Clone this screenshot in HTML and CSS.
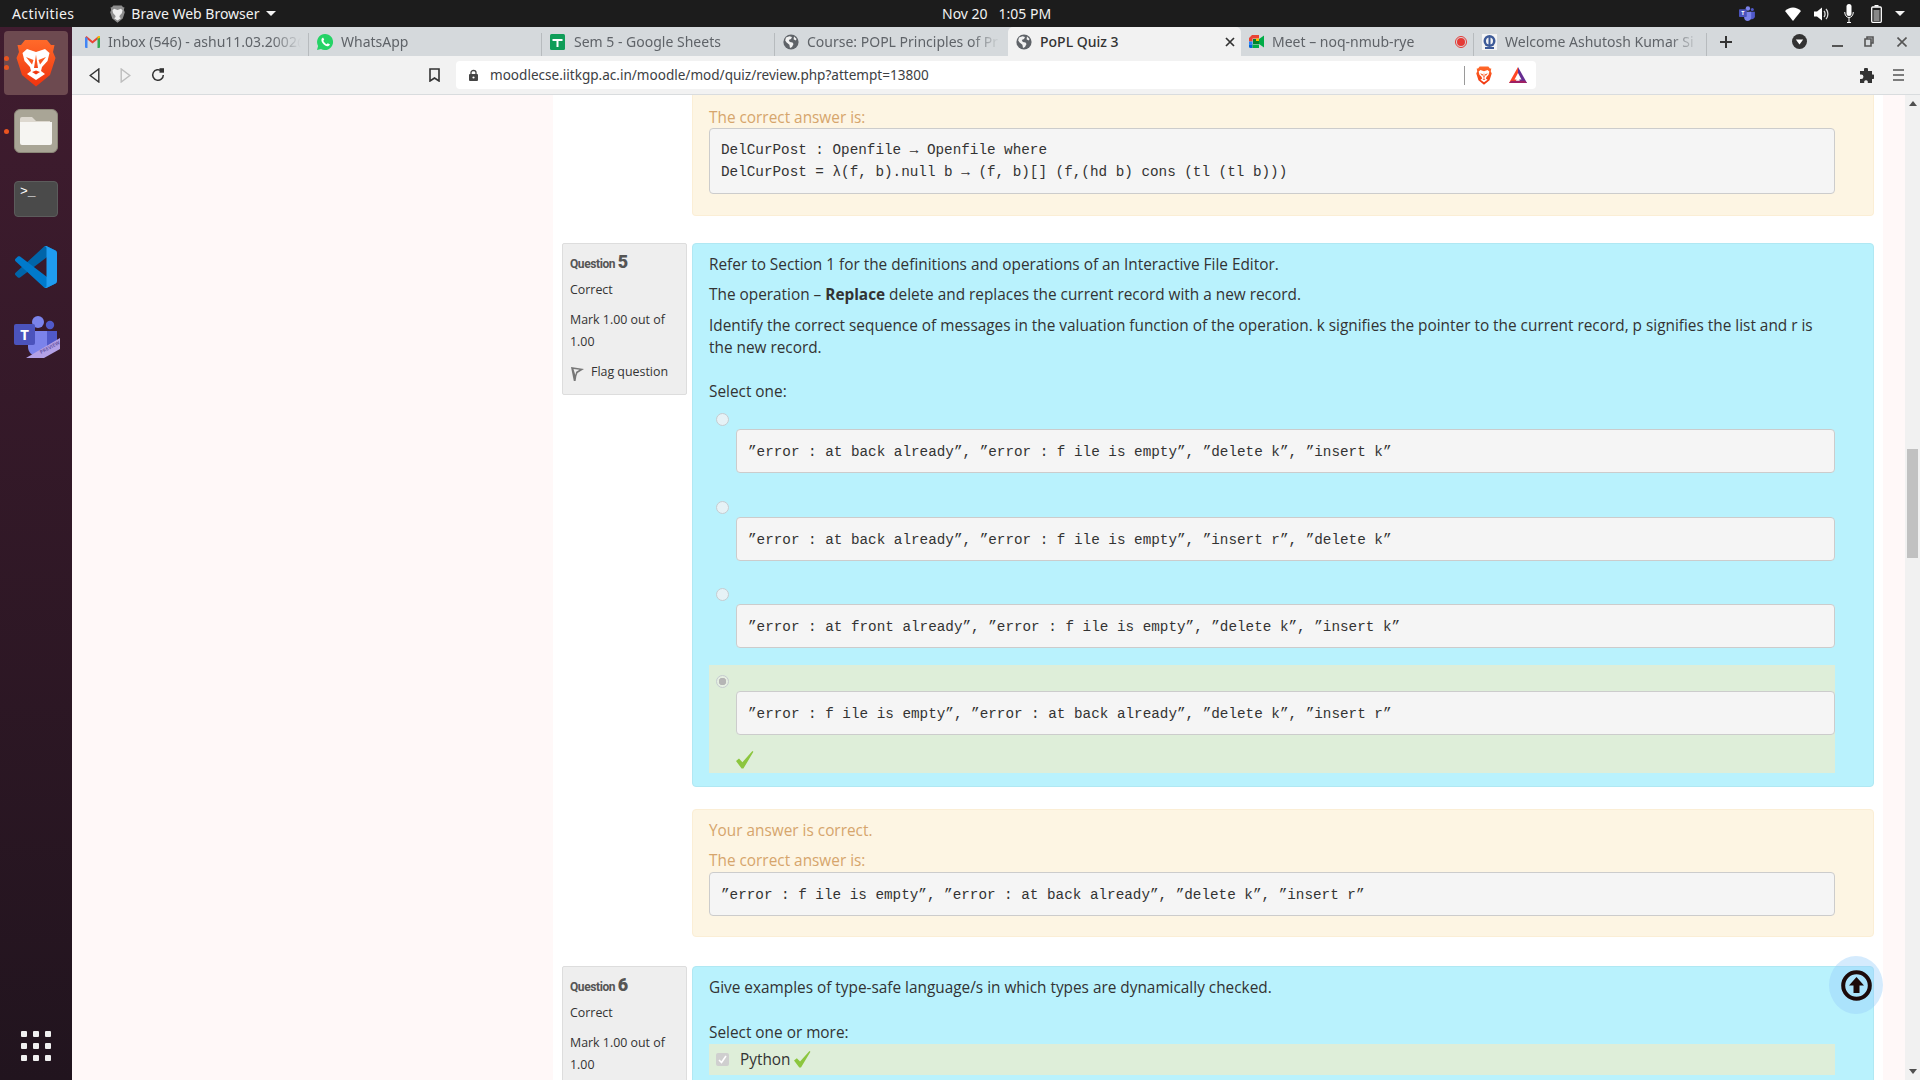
FILE: index.html
```html
<!DOCTYPE html>
<html lang="en">
<head>
    <meta charset="UTF-8">
    <meta name="viewport" content="width=device-width, initial-scale=1.0">
    <title>PoPL Quiz 3</title>
    <link rel="stylesheet" href="styles.css">
</head>
<body>

    <!-- shared icons -->
    <svg class="defs" width="0" height="0">
        <defs>
            <linearGradient id="braveGrad" x1="0" y1="0" x2="0" y2="1">
                <stop offset="0" stop-color="#ff6a2a"/>
                <stop offset="1" stop-color="#f0330e"/>
            </linearGradient>
            <symbol id="brave" viewBox="0 0 40 48">
                <path fill="url(#braveGrad)" d="M9 1H31L35 6H38.5L37 13L39.5 19L34 36L20 47.5L6 36L.5 19L3 13L1.5 6H5Z"/>
                <path fill="#fff" d="M11 10L20 13L29 10L33.5 14L31.5 22L26 28L25 32L29 35L20 41L11 35L15 32L14 28L8.5 22L6.5 14Z"/>
                <path fill="url(#braveGrad)" d="M10 18L17.5 21L16 25.5ZM30 18L22.5 21L24 25.5ZM20 15.5L18 29H22ZM16 33L20 31.5L24 33L20 35.5Z"/>
            </symbol>
            <symbol id="globe" viewBox="0 0 16 16">
                <circle cx="8" cy="8" r="7.6" fill="#5f6368"/>
                <path fill="#f2f2f2" d="M3 3.4L6.5 2.2L9 3L8 5L5.8 6L6.8 8L9.5 8.4L10.5 10L9 13L7 14L6.4 10.8L3.6 8.6L2.2 6.6ZM11 2.6L13.6 5L12.6 6.4L10.6 5.2Z"/>
            </symbol>
            <symbol id="check" viewBox="0 0 18 18">
                <path fill="#8cc63f" d="M0 10L3 7.6L6.4 11.2L16.4 0L17.4 .8L7.4 17.6H5.6Z"/>
            </symbol>
            <symbol id="teams" viewBox="0 0 46 42">
                <circle cx="24" cy="6" r="6" fill="#7b83eb"/>
                <circle cx="36" cy="9" r="4.2" fill="#5059c9"/>
                <path fill="#5059c9" d="M30 15H43V28C43 32 39 35 35 35H30Z"/>
                <path fill="#7b83eb" d="M14 15H33V31C33 36 28 40 23 40C18 40 14 36 14 31Z"/>
                <rect y="8" width="21" height="21" rx="2" fill="#4b53bc"/>
                <text x="10.5" y="24" class="teams-t">T</text>
            </symbol>
        </defs>
    </svg>

    <header class="topbar">
        <span class="top-item activities">Activities</span>
        <span class="top-item app-menu">
            <svg class="top-lion" width="15" height="18" viewBox="0 0 40 48">
                <path fill="#8e8e8e" d="M9 1H31L35 6H38.5L37 13L39.5 19L34 36L20 47.5L6 36L.5 19L3 13L1.5 6H5Z"/>
                <path fill="#eee" d="M11 10L20 13L29 10L33.5 14L31.5 22L26 28L25 32L29 35L20 41L11 35L15 32L14 28L8.5 22L6.5 14Z"/>
            </svg>
            Brave Web Browser
            <i class="caret"></i>
        </span>
        <span class="clock">Nov 20 &nbsp; 1:05 PM</span>
        <div class="tray">
            <svg class="tray-teams" width="17" height="16"><use href="#teams"/></svg>
            <svg class="tray-wifi" width="16" height="14" viewBox="0 0 16 14"><path fill="#fff" d="M0 4C4.500 -.8 11.500 -.8 16 4L8 14Z"/></svg>
            <svg class="tray-vol" width="15" height="14" viewBox="0 0 15 14"><path fill="#fff" d="M0 4.500H3L8 .5V13.500L3 9.500H0Z"/><path fill="none" stroke="#ddd" stroke-width="1.300" d="M10 4C11.400 5.500 11.400 8.500 10 10M12 2C14.500 4.500 14.500 9.500 12 12"/></svg>
            <svg class="tray-mic" width="10" height="19" viewBox="0 0 10 19"><rect x="2.500" width="5" height="12" rx="2.500" fill="#fff"/><path fill="none" stroke="#fff" d="M.7 8C.7 11 2.500 13.500 5 13.500S9.300 11 9.300 8M5 13.500V18M3 18.500H7"/></svg>
            <svg class="tray-bat" width="11" height="18" viewBox="0 0 11 18"><path fill="#fff" d="M3.500 0H7.500V1.500H3.500Z"/><rect x=".7" y="2" width="9.600" height="15.300" rx="1" fill="none" stroke="#fff" stroke-width="1.300"/><rect x="2.500" y="5" width="6" height="11" fill="#888"/></svg>
            <i class="caret tray-caret"></i>
        </div>
    </header>

    <div class="desktop">
        <nav class="dock">
            <div class="dock-item">
                <div class="dock-active">
                    <svg width="40" height="48"><use href="#brave"/></svg>
                </div>
                <span class="run-dots"><i></i><i></i></span>
            </div>
            <div class="dock-item">
                <div class="files-tile">
                    <svg width="32" height="28" viewBox="0 0 32 28">
                        <path fill="#ddd8cf" d="M2 0H12L16 4H30V12H0V2Q0 0 2 0Z"/>
                        <path fill="#f6f5f2" d="M0 5H32V26Q32 28 30 28H2Q0 28 0 26Z"/>
                    </svg>
                </div>
                <span class="run-dots"><i></i></span>
            </div>
            <div class="dock-item">
                <div class="term-tile"><span>&gt;_</span></div>
            </div>
            <div class="dock-item">
                <svg width="42" height="42" viewBox="0 0 100 100">
                    <path fill="#0065a9" d="M96.46 10.8L75.86.88C73.47-.27 70.62.21 68.75 2.08L1.3 63.58C-.52 65.24-.51 68.09 1.3 69.75L6.81 74.75C8.3 76.1 10.53 76.2 12.13 74.99L93.36 13.37C96.09 11.3 100 13.25 100 16.67V16.43C100 14.03 98.62 11.84 96.46 10.8Z"/>
                    <path fill="#007acc" d="M96.46 89.2L75.86 99.12C73.47 100.27 70.62 99.79 68.75 97.92L1.3 36.42C-.52 34.76-.51 31.91 1.3 30.25L6.81 25.25C8.3 23.9 10.53 23.8 12.13 25.01L93.36 86.63C96.09 88.7 100 86.75 100 83.33V83.57C100 85.97 98.62 88.16 96.46 89.2Z"/>
                    <path fill="#1f9cf0" d="M75.86 99.13C73.47 100.27 70.62 99.79 68.75 97.92C71.06 100.22 75 98.59 75 95.33V4.67C75 1.41 71.06-.22 68.75 2.08C70.62.21 73.47-.27 75.86.87L96.46 10.78C98.62 11.82 100 14.01 100 16.41V83.59C100 85.99 98.62 88.18 96.46 89.22Z"/>
                </svg>
            </div>
            <div class="dock-item dock-teams">
                <svg width="46" height="42" viewBox="0 0 46 42">
                    <use href="#teams" width="46" height="42"/>
                    <path fill="#b3a1e6" d="M12 42L46 22V33L30 42Z"/>
                    <text x="27" y="38" class="preview-t" transform="rotate(-28 27 38)">PREVIEW</text>
                </svg>
            </div>
            <div class="app-grid">
                <i></i><i></i><i></i><i></i><i></i><i></i><i></i><i></i><i></i>
            </div>
        </nav>

        <div class="browser">
            <div class="tabstrip">
                <div class="tab tab-first sep">
                    <svg class="fav" width="15" height="12" viewBox="0 0 15 12">
                        <path fill="#ea4335" d="M0 1.500L1.500 0L7.500 5L13.500 0L15 1.500L7.500 7.500Z"/>
                        <path fill="#4285f4" d="M0 1.500H2.500V12H1Q0 12 0 11Z"/>
                        <path fill="#34a853" d="M12.500 1.500H15V11Q15 12 14 12H12.500Z"/>
                        <path fill="#fbbc04" d="M12.500 3L15 1.500V0L13.500 0L12.500 1Z"/>
                    </svg>
                    <span class="tab-title">Inbox (546) - ashu11.03.2002@</span>
                </div>
                <div class="tab sep">
                    <svg class="fav" width="16" height="16" viewBox="0 0 16 16">
                        <path fill="#25d366" d="M8 0A8 8 0 1 1 4 14.900L0 16L1.100 12A8 8 0 0 1 8 0Z"/>
                        <path fill="#fff" d="M5.500 3.800C4 5 4 7 5.500 9S9 12.500 11 12.200C12.300 12 13 10.800 12.800 10.300L10.700 9.200L9.700 10.200C8.400 9.800 6.700 8 6.300 6.700L7.200 5.700L6.300 3.700Z"/>
                    </svg>
                    <span class="tab-title">WhatsApp</span>
                </div>
                <div class="tab sep">
                    <svg class="fav fav-wide" width="15" height="16" viewBox="0 0 15 16">
                        <rect width="15" height="16" rx="1.500" fill="#0f9d58"/>
                        <path fill="#fff" d="M2.500 5H12.500V7H8.500V13H6.500V7H2.500Z"/>
                    </svg>
                    <span class="tab-title">Sem 5 - Google Sheets</span>
                </div>
                <div class="tab">
                    <svg class="fav" width="16" height="16"><use href="#globe"/></svg>
                    <span class="tab-title">Course: POPL Principles of Pr</span>
                </div>
                <div class="tab tab-active">
                    <svg class="fav" width="16" height="16"><use href="#globe"/></svg>
                    <span class="tab-title">PoPL Quiz 3</span>
                    <svg class="tab-close" width="10" height="10" viewBox="0 0 10 10"><path stroke="#333" stroke-width="1.700" d="M1 1L9 9M9 1L1 9"/></svg>
                </div>
                <div class="tab sep">
                    <svg class="fav" width="15" height="13" viewBox="0 0 15 13">
                        <path fill="#00832d" d="M4 4H10V9H4Z"/>
                        <path fill="#ea4335" d="M3 0H10V3.500H3.500V6.500H0V3Z"/>
                        <path fill="#2684fc" d="M0 6.500H3.500V9.500H0Z"/>
                        <path fill="#0066da" d="M0 9.500H3.500V13H1.500Q0 13 0 11.500Z"/>
                        <path fill="#00ac47" d="M3.500 9.500H10V13H3.500Z"/>
                        <path fill="#ffba00" d="M10 0V6L7 6V3.500H10Z"/>
                        <path fill="#00ac47" d="M10 4L15 .5V12.500L10 9Z"/>
                    </svg>
                    <span class="tab-title">Meet – noq-nmub-rye</span>
                    <svg class="rec-dot" width="12" height="12" viewBox="0 0 12 12"><circle cx="6" cy="6" r="5.500" fill="none" stroke="#e53935"/><circle cx="6" cy="6" r="4" fill="#e53935"/></svg>
                </div>
                <div class="tab sep">
                    <svg class="fav" width="15" height="16" viewBox="0 0 15 16">
                        <rect width="15" height="16" fill="#f4f4f4"/>
                        <circle cx="7.500" cy="7" r="6" fill="#3d5a98"/>
                        <circle cx="7.500" cy="7" r="3.500" fill="#f4f4f4"/>
                        <path fill="#3d5a98" d="M6.500 3H8.500V12H6.500ZM3 13H12V15H3Z"/>
                    </svg>
                    <span class="tab-title">Welcome Ashutosh Kumar Si</span>
                </div>
                <svg class="new-tab" width="14" height="14" viewBox="0 0 14 14"><path stroke="#333" stroke-width="2" d="M7 1V13M1 7H13"/></svg>
                <div class="win-controls">
                    <svg width="15" height="15" viewBox="0 0 15 15"><circle cx="7.500" cy="7.500" r="7.500" fill="#333"/><path fill="#fff" d="M3.800 5.500H11.200L7.500 10.500Z"/></svg>
                    <svg class="win-min" width="11" height="10" viewBox="0 0 11 10"><path stroke="#555" stroke-width="2" d="M0 9H11"/></svg>
                    <svg class="win-max" width="10" height="11" viewBox="0 0 10 11"><path fill="none" stroke="#555" stroke-width="1.600" d="M3 3V1H9V7H7M1 3H7V10H1Z"/></svg>
                    <svg class="win-close" width="10" height="10" viewBox="0 0 10 10"><path stroke="#555" stroke-width="1.600" d="M.5 .5L9.500 9.500M9.500 .5L.5 9.500"/></svg>
                </div>
            </div>

            <div class="toolbar">
                <div class="nav-buttons">
                    <svg width="11" height="15" viewBox="0 0 11 15"><path fill="none" stroke="#333" stroke-width="1.400" d="M9.800 1V14L1.200 7.500Z"/></svg>
                    <svg width="11" height="15" viewBox="0 0 11 15"><path fill="none" stroke="#bdbdbd" stroke-width="1.400" d="M1.200 1V14L9.800 7.500Z"/></svg>
                    <svg width="14" height="14" viewBox="0 0 14 14"><path fill="none" stroke="#333" stroke-width="1.500" d="M12.300 7A5.300 5.300 0 1 1 10.500 3"/><path fill="#333" d="M8.500 .2H13V4.700H8.500Z"/></svg>
                </div>
                <svg class="bookmark" width="11" height="14" viewBox="0 0 11 14"><path fill="none" stroke="#333" stroke-width="1.600" d="M1 1H10V13L5.500 10L1 13Z"/></svg>
                <div class="urlbar">
                    <svg class="lock" width="9" height="12" viewBox="0 0 9 12"><path fill="none" stroke="#444" stroke-width="1.300" d="M2 5.500V3.500C2 .8 7 .8 7 3.500V5.500"/><rect y="5" width="9" height="7" rx="1" fill="#444"/><circle cx="4.500" cy="8.500" r="1.100" fill="#fff"/></svg>
                    <span class="url-text">moodlecse.iitkgp.ac.in/moodle/mod/quiz/review.php?attempt=13800</span>
                    <span class="url-sep"></span>
                    <svg class="url-lion" width="16" height="19"><use href="#brave"/></svg>
                    <svg class="url-bat" width="18" height="16" viewBox="0 0 18 16">
                        <path fill="#662d91" d="M9 0L18 16H11.500L9 9Z"/>
                        <path fill="#ff4724" d="M9 0L0 16H6L9 9Z"/>
                        <path fill="#9e1f63" d="M0 16H18L15.800 13.800H2.200Z"/>
                        <path fill="#fff" d="M9 6L12.500 12.500H5.500Z"/>
                    </svg>
                </div>
                <svg class="puzzle" width="15" height="15" viewBox="0 0 15 15"><path fill="#333" d="M5 1.500A2 2 0 0 1 9 1.500V3H13V6.500H14A2.200 2.200 0 0 1 14 11H13V15H8.800V13.500A1.900 1.900 0 0 0 5.200 13.500V15H1V11H2.200A2.200 2.200 0 0 0 2.200 6.500H1V3H5Z"/></svg>
                <svg class="menu" width="11" height="12" viewBox="0 0 11 12"><path stroke="#555" stroke-width="1.400" d="M0 1H11M0 6H11M0 11H11"/></svg>
            </div>

            <div class="viewport">
                <div class="page">
                    <main class="page-main">

                        <div class="outcome outcome-top">
                            <div class="outcome-line">The correct answer is:</div>
                            <pre class="code-box">DelCurPost : Openfile → Openfile where
DelCurPost = λ(f, b).null b → (f, b)[] (f,(hd b) cons (tl (tl b)))</pre>
                        </div>

                        <section class="que">
                            <div class="info">
                                <div class="que-no">Question <b>5</b></div>
                                <div class="info-line">Correct</div>
                                <div class="info-line">Mark 1.00 out of 1.00</div>
                                <div class="flag">
                                    <svg width="13" height="15" viewBox="0 0 13 15"><path fill="#777" d="M0 1L13 3L6.500 7L5.400 10L4.600 15H2.800ZM2.500 3L4.300 9L5.200 5.800L8.500 3.800Z"/></svg>
                                    <span>Flag question</span>
                                </div>
                            </div>
                            <div class="que-main">
                                <div class="formulation">
                                    <p>Refer to Section 1 for the definitions and operations of an Interactive File Editor.</p>
                                    <p>The operation – <strong>Replace</strong> delete and replaces the current record with a new record.</p>
                                    <p>Identify the correct sequence of messages in the valuation function of the operation. k signifies the pointer to the current record, p signifies the list and r is the new record.</p>
                                    <div class="prompt">Select one:</div>
                                    <div class="option">
                                        <i class="radio"></i>
                                        <pre class="code-box code-quoted">”error : at back already”, ”error : f ile is empty”, ”delete k”, ”insert k”</pre>
                                    </div>
                                    <div class="option">
                                        <i class="radio"></i>
                                        <pre class="code-box code-quoted">”error : at back already”, ”error : f ile is empty”, ”insert r”, ”delete k”</pre>
                                    </div>
                                    <div class="option">
                                        <i class="radio"></i>
                                        <pre class="code-box code-quoted">”error : at front already”, ”error : f ile is empty”, ”delete k”, ”insert k”</pre>
                                    </div>
                                    <div class="option option-correct">
                                        <i class="radio radio-on"></i>
                                        <pre class="code-box code-quoted">”error : f ile is empty”, ”error : at back already”, ”delete k”, ”insert r”</pre>
                                        <svg class="tick" width="18" height="18"><use href="#check"/></svg>
                                    </div>
                                </div>
                                <div class="outcome">
                                    <p class="outcome-line">Your answer is correct.</p>
                                    <div class="outcome-line">The correct answer is:</div>
                                    <pre class="code-box code-quoted">”error : f ile is empty”, ”error : at back already”, ”delete k”, ”insert r”</pre>
                                </div>
                            </div>
                        </section>

                        <section class="que">
                            <div class="info">
                                <div class="que-no">Question <b>6</b></div>
                                <div class="info-line">Correct</div>
                                <div class="info-line">Mark 1.00 out of 1.00</div>
                            </div>
                            <div class="que-main">
                                <div class="formulation">
                                    <p>Give examples of type-safe language/s in which types are dynamically checked.</p>
                                    <div class="prompt prompt-multi">Select one or more:</div>
                                    <div class="choice-correct">
                                        <span class="checkbox">
                                            <svg width="9" height="9" viewBox="0 0 9 9"><path fill="none" stroke="#fff" stroke-width="1.600" d="M1 5L3.500 7.500L8 1"/></svg>
                                        </span>
                                        <span>Python</span>
                                        <svg class="tick-inline" width="17" height="17"><use href="#check"/></svg>
                                    </div>
                                </div>
                            </div>
                        </section>

                    </main>
                </div>

                <div class="scrollbar">
                    <i class="sb-up"></i>
                    <div class="sb-thumb"></div>
                    <i class="sb-down"></i>
                </div>

                <a class="back-top">
                    <svg width="31" height="31" viewBox="0 0 31 31">
                        <circle cx="15.500" cy="15.500" r="13.300" fill="none" stroke="#1c0a0a" stroke-width="4"/>
                        <path fill="#1c0a0a" d="M15.500 7L23 15.500H18.500V23H12.500V15.500H8Z"/>
                    </svg>
                </a>
            </div>
        </div>
    </div>

</body>
</html>
```

FILE: styles.css
```css
* {
    box-sizing: border-box;
}
html, body {
    margin: 0;
    padding: 0;
    height: 1080px;
    overflow: hidden;
}
body {
    font-family: 'Open Sans', sans-serif;
    font-size: 15.36px;
    line-height: 22px;
    color: #333333;
    background-color: #ffffff;
    display: flex;
    flex-direction: column;
}
i {
    display: block;
}
svg {
    display: block;
    flex-shrink: 0;
}
.defs {
    position: absolute;
}
.teams-t {
    font-family: 'Open Sans', sans-serif;
    font-size: 15px;
    font-weight: 700;
    fill: #ffffff;
    text-anchor: middle;
}
.preview-t {
    font-family: 'Open Sans', sans-serif;
    font-size: 5px;
    font-weight: 700;
    fill: #6a5aa8;
}

/* top bar */
.topbar {
    height: 27px;
    flex-shrink: 0;
    background-color: #1c1c1c;
    color: #f2f2f2;
    font-family: 'Noto Sans', sans-serif;
    font-size: 14px;
    line-height: 27px;
    display: flex;
    align-items: center;
    position: relative;
}
.activities {
    margin-left: 12px;
    letter-spacing: 0.4px;
}
.app-menu {
    margin-left: 36px;
    display: flex;
    align-items: center;
}
.top-lion {
    margin-right: 6px;
}
.caret {
    width: 0;
    height: 0;
    border-left: 5px solid transparent;
    border-right: 5px solid transparent;
    border-top: 5px solid #f2f2f2;
}
.app-menu .caret {
    margin-left: 6px;
}
.clock {
    position: absolute;
    left: 942px;
}
.tray {
    margin-left: auto;
    display: flex;
    align-items: center;
    padding-right: 15px;
}
.tray-wifi {
    margin-left: 29px;
}
.tray-vol {
    margin-left: 13px;
}
.tray-mic {
    margin-left: 15px;
}
.tray-bat {
    margin-left: 17px;
}
.tray-caret {
    margin-left: 13px;
}

/* dock */
.desktop {
    flex: 1;
    display: flex;
    min-height: 0;
}
.dock {
    width: 72px;
    flex-shrink: 0;
    padding-top: 2px;
    background: linear-gradient(#401c2f, #21141e);
    display: flex;
    flex-direction: column;
}
.dock-item {
    height: 68px;
    flex-shrink: 0;
    display: flex;
    align-items: center;
    justify-content: center;
    position: relative;
}
.dock-teams {
    margin-top: 2px;
    padding-left: 2px;
}
.dock-active {
    width: 64px;
    height: 64px;
    border-radius: 4px;
    background-color: #6d4a50;
    display: flex;
    align-items: center;
    justify-content: center;
}
.run-dots {
    position: absolute;
    left: 4px;
    top: 0;
    bottom: 0;
    display: flex;
    flex-direction: column;
    justify-content: center;
    gap: 4px;
}
.run-dots i {
    width: 5px;
    height: 5px;
    border-radius: 50%;
    background-color: #e95420;
}
.files-tile {
    width: 44px;
    height: 44px;
    border-radius: 6px;
    background-color: #a9a596;
    border: 1px solid #8b8778;
    display: flex;
    align-items: center;
    justify-content: center;
}
.term-tile {
    width: 44px;
    height: 36px;
    border-radius: 4px;
    background-color: #4a4a4a;
    border: 1px solid #5c5c5c;
    color: #ffffff;
    font-family: 'Liberation Mono', monospace;
    font-size: 13px;
    line-height: 14px;
    padding: 3px 0 0 5px;
}
.app-grid {
    margin: auto 21px 19px;
    display: grid;
    grid-template-columns: repeat(3, 6px);
    gap: 6px;
}
.app-grid i {
    width: 6px;
    height: 6px;
    border-radius: 1px;
    background-color: #f0f0f0;
}

/* browser chrome */
.browser {
    flex: 1;
    min-width: 0;
    display: flex;
    flex-direction: column;
    position: relative;
}
.tabstrip {
    height: 29px;
    flex-shrink: 0;
    padding-left: 4px;
    background-color: #d5d9dc;
    font-family: 'Noto Sans', sans-serif;
    font-size: 14px;
    color: #5f6368;
    display: flex;
    align-items: center;
}
.tab {
    width: 233px;
    height: 29px;
    flex-shrink: 0;
    padding: 0 8px;
    display: flex;
    align-items: center;
    position: relative;
}
.tab.sep::after {
    content: '';
    position: absolute;
    right: 0;
    top: 6px;
    bottom: 0;
    width: 1px;
    background-color: #b7bbbe;
}
.tab-first {
    padding-left: 9px;
}
.tab-active {
    background-color: #f2f2f2;
    border-radius: 5px 5px 0 0;
    color: #333333;
    font-weight: 500;
}
.fav {
    margin-right: 8px;
}
.fav-wide {
    margin-right: 9px;
}
.tab-title {
    flex: 1;
    min-width: 0;
    white-space: nowrap;
    overflow: hidden;
    -webkit-mask-image: linear-gradient(to right, #000 85%, transparent 100%);
    mask-image: linear-gradient(to right, #000 85%, transparent 100%);
}
.tab-active .tab-title {
    -webkit-mask-image: none;
    mask-image: none;
}
.tab-close {
    margin-right: -2px;
}
.rec-dot {
    margin-right: -1px;
}
.new-tab {
    margin-left: 12px;
}
.win-controls {
    margin-left: auto;
    padding-right: 13px;
    display: flex;
    align-items: center;
}
.win-min {
    margin-left: 25px;
}
.win-max {
    margin-left: 21px;
}
.win-close {
    margin-left: 23px;
}

.toolbar {
    height: 39px;
    flex-shrink: 0;
    background-color: #f2f2f2;
    border-bottom: 1px solid #d9dcde;
    padding: 5px 0 5px 17px;
    display: flex;
    align-items: center;
}
.nav-buttons {
    display: flex;
    align-items: center;
    gap: 20px;
}
.bookmark {
    margin-left: 264px;
}
.urlbar {
    width: 1080px;
    height: 28px;
    margin-left: 16px;
    padding-left: 13px;
    background-color: #ffffff;
    border-radius: 4px;
    font-family: 'Noto Sans', sans-serif;
    font-size: 13.55px;
    color: #3c4043;
    display: flex;
    align-items: center;
}
.lock {
    margin-right: 12px;
}
.url-text {
    flex: 1;
    white-space: nowrap;
}
.url-sep {
    width: 1px;
    height: 19px;
    background-color: #9a9a9a;
}
.url-lion {
    margin-left: 11px;
}
.url-bat {
    margin: 0 9px 0 17px;
}
.puzzle {
    margin-left: 323px;
}
.menu {
    margin-left: 19px;
}

/* page */
.viewport {
    flex: 1;
    min-height: 0;
    display: flex;
    position: relative;
}
.page {
    flex: 1;
    min-width: 0;
    overflow: hidden;
    background-color: #fff8f8;
    padding: 0 22px 0 481px;
}
.page-main {
    height: 100%;
    background-color: #ffffff;
    padding: 0 9px;
}
.code-box {
    margin: 0;
    padding: 10px 11px;
    background-color: #f5f5f5;
    border: 1px solid #cccccc;
    border-radius: 4px;
    font-family: 'Liberation Mono', monospace;
    font-size: 14.3px;
    line-height: 22px;
    color: #333333;
}
.code-quoted {
    padding: 11px 11px 9px;
}
.outcome {
    background-color: #fdf5e3;
    border: 1px solid #fbeed5;
    border-radius: 4px;
    padding: 10px 38px 10px 16px;
    margin-bottom: 29px;
}
.outcome-top {
    margin-left: 130px;
    margin-bottom: 27px;
    border-top: none;
    border-radius: 0 0 4px 4px;
    padding: 12px 38px 11px 16px;
}
.outcome-line {
    margin: 0;
    color: #d6a56c;
}
.outcome-top .outcome-line {
    margin-bottom: -1px;
}
p.outcome-line {
    margin-bottom: 8px;
}
.outcome .code-box {
    margin-bottom: 10px;
}
.que {
    display: flex;
    align-items: flex-start;
}
.info {
    width: 125px;
    flex-shrink: 0;
    margin-right: 5px;
    padding: 7px 7px 11px;
    background-color: #eeeeee;
    border: 1px solid #dddddd;
    border-radius: 2px;
    font-size: 12.4px;
    line-height: 22px;
}
.que-no {
    font-family: 'Liberation Sans Narrow', 'Roboto', sans-serif;
    font-weight: 700;
    font-size: 12px;
    letter-spacing: -0.4px;
    line-height: 22px;
    color: #555555;
}
.que-no b {
    font-size: 18px;
}
.info-line {
    margin-top: 8px;
}
.que-no + .info-line {
    margin-top: 4px;
}
.flag {
    margin-top: 8px;
    padding-left: 1px;
    display: flex;
    align-items: center;
    gap: 7px;
}
.flag svg {
    margin-top: 3px;
}
.que-main {
    flex: 1;
    min-width: 0;
}
.formulation {
    background-color: #b9f2fd;
    border: 1px solid #b0e8f3;
    border-radius: 4px;
    padding: 10px 38px 13px 16px;
    margin-bottom: 22px;
}
.formulation p {
    margin: 0 0 8px;
}
.formulation p + p + p {
    margin-top: 9px;
}
.prompt {
    margin-top: 22px;
}
.prompt-multi {
    margin-top: 23px;
}
.option {
    margin-bottom: 17px;
    padding: 10px 0 0 7px;
}
.prompt + .option {
    margin-bottom: 18px;
}
.option .code-box {
    margin: 3px 0 0 20px;
}
.radio {
    width: 13px;
    height: 13px;
    border-radius: 50%;
    background-color: #e6f2f6;
    border: 1px solid #c6ccd0;
}
.option-correct {
    margin: 0;
    padding-top: 10px;
    padding-bottom: 4px;
    background-color: #deeed9;
}
.radio-on {
    background: radial-gradient(circle, #b5b5b5 3.5px, #e6efe2 4px);
}
.tick {
    margin: 16px 0 0 20px;
    height: 18px;
}
.choice-correct {
    height: 31px;
    padding-left: 7px;
    background-color: #deeed9;
    display: flex;
    align-items: center;
}
.checkbox {
    width: 13px;
    height: 13px;
    margin-right: 11px;
    background-color: #cfcfcf;
    border-radius: 2px;
    display: flex;
    align-items: center;
    justify-content: center;
}
.tick-inline {
    margin-left: 3px;
}

/* scrollbar */
.scrollbar {
    width: 15px;
    flex-shrink: 0;
    background-color: #f1f1f1;
    display: flex;
    flex-direction: column;
    align-items: center;
    padding: 6px 0;
}
.sb-up {
    width: 0;
    height: 0;
    border-left: 4px solid transparent;
    border-right: 4px solid transparent;
    border-bottom: 5px solid #505050;
}
.sb-thumb {
    width: 11px;
    height: 109px;
    margin-top: 343px;
    background-color: #c1c1c1;
}
.sb-down {
    width: 0;
    height: 0;
    margin-top: auto;
    border-left: 4px solid transparent;
    border-right: 4px solid transparent;
    border-top: 5px solid #505050;
}

.back-top {
    position: absolute;
    left: 1757px;
    top: 861px;
    width: 54px;
    height: 58px;
    border-radius: 50%;
    background-color: rgba(150, 205, 250, 0.4);
    display: flex;
    align-items: center;
    justify-content: center;
}
```
